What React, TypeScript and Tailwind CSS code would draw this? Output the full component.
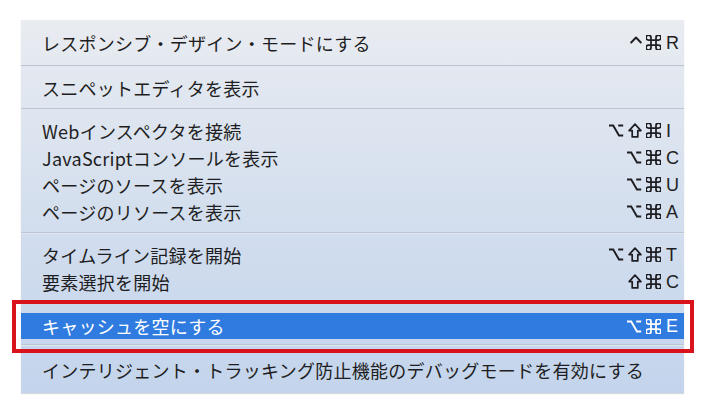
import React from "react";

type Mod = "ctrl" | "opt" | "shift" | "cmd";
type Item = { label: string; mods?: Mod[]; k?: string; active?: boolean };

const jp = { fontFamily: '"Noto Sans CJK JP", "Noto Sans", sans-serif' };
const lat = { fontFamily: '"Liberation Sans", "DejaVu Sans", sans-serif' };

function ModIcon({ m }: { m: Mod }) {
  const common = {
    fill: "none",
    stroke: "currentColor",
    strokeLinecap: "round" as const,
    strokeLinejoin: "round" as const,
  };
  if (m === "ctrl")
    return (
      <svg width="12" height="16" viewBox="0 0 12 16" className="shrink-0">
        <path d="M1.2 7.5 L6 2.5 L10.8 7.5" strokeWidth="1.9" {...common} />
      </svg>
    );
  if (m === "opt")
    return (
      <svg width="16" height="13" viewBox="0 0 16 13" className="shrink-0">
        <path d="M1 1.5 H5.2 L11 11.5 H15.2 M10.2 1.5 H15.2" strokeWidth="1.9" {...common} strokeLinecap="butt" strokeLinejoin="miter" />
      </svg>
    );
  if (m === "shift")
    return (
      <svg width="14" height="15" viewBox="0 0 14 15" className="shrink-0">
        <path d="M7 1.2 L12.9 7.6 H9.8 V13.9 H4.2 V7.6 H1.1 Z" strokeWidth="1.7" {...common} />
      </svg>
    );
  return (
    <svg width="15" height="15" viewBox="3 3 18 18" className="shrink-0">
      <path
        d="M15 6v12a3 3 0 1 0 3-3H6a3 3 0 1 0 3 3V6a3 3 0 1 0-3 3h12a3 3 0 1 0-3-3"
        strokeWidth="2.1"
        {...common}
      />
    </svg>
  );
}

function Row({ item, h }: { item: Item; h: string }) {
  return (
    <div
      className={`flex items-center justify-between pl-[21px] ${h} ${
        item.active ? "bg-[#2f7be0] text-white" : "text-[#1e1e22]"
      }`}
    >
      <span className="text-[18px] leading-none tracking-[0.25px]" style={jp}>
        {item.label}
      </span>
      {item.k && (
        <div className="flex items-center">
          <div className="flex items-center gap-[4px]">
            {item.mods?.map((m, i) => (
              <ModIcon key={i} m={m} />
            ))}
          </div>
          <span className="w-[18px] ml-[5px] text-[18px] leading-none" style={lat}>
            {item.k}
          </span>
        </div>
      )}
    </div>
  );
}

function Sep() {
  return <div className="h-[2px] bg-[#bcc6d2] border-b border-[#e0e6ef]" />;
}

export default function App() {
  return (
    <div className="w-[706px] h-[414px] bg-white relative">
      <div className="absolute left-0 top-0 w-[706px] h-[414px] pt-[20px] pl-[21px]">
        <div className="w-[663px] h-[373px] flex flex-col bg-gradient-to-b from-[#e9ecf1] via-[#d4dfee] to-[#c3d4ec] shadow-[0_1px_1px_rgba(0,0,0,0.15)]">
          <Row item={{ label: "レスポンシブ・デザイン・モードにする", mods: ["ctrl", "cmd"], k: "R" }} h="h-[45px]" />
          <Sep />
          <Row item={{ label: "スニペットエディタを表示" }} h="h-[41px]" />
          <Sep />
          <div className="py-[7px] flex flex-col">
            <Row item={{ label: "Webインスペクタを接続", mods: ["opt", "shift", "cmd"], k: "I" }} h="h-[27px]" />
            <Row item={{ label: "JavaScriptコンソールを表示", mods: ["opt", "cmd"], k: "C" }} h="h-[27px]" />
            <Row item={{ label: "ページのソースを表示", mods: ["opt", "cmd"], k: "U" }} h="h-[27px]" />
            <Row item={{ label: "ページのリソースを表示", mods: ["opt", "cmd"], k: "A" }} h="h-[27px]" />
          </div>
          <Sep />
          <div className="pt-[7px] pb-[6px] flex flex-col">
            <Row item={{ label: "タイムライン記録を開始", mods: ["opt", "shift", "cmd"], k: "T" }} h="h-[27px]" />
            <Row item={{ label: "要素選択を開始", mods: ["shift", "cmd"], k: "C" }} h="h-[27px]" />
          </div>
          <Sep />
          <div className="pt-[10px] pb-[5px]">
            <Row item={{ label: "キャッシュを空にする", mods: ["opt", "cmd"], k: "E", active: true }} h="h-[26px]" />
          </div>
          <Sep />
          <Row item={{ label: "インテリジェント・トラッキング防止機能のデバッグモードを有効にする" }} h="flex-1" />
        </div>
      </div>
      <div className="absolute left-[12px] top-[300px] w-[682px] h-[53px] border-[4px] border-[#d8131b]" />
    </div>
  );
}
